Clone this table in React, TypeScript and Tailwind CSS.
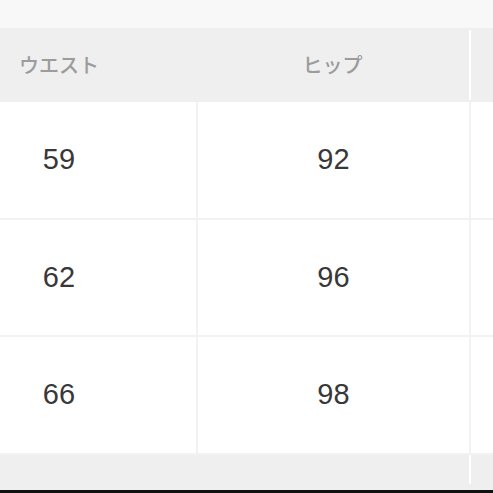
// App.tsx
const rows = [
  { waist: "59", hip: "92" },
  { waist: "62", hip: "96" },
  { waist: "66", hip: "98" },
];

const rowHeights = ["h-[118px]", "h-[117px]", "h-[118px]"];

export default function App() {
  return (
    <div className="w-[493px] h-[493px] overflow-hidden bg-white flex flex-col font-['Liberation_Sans','Noto_Sans_CJK_JP',sans-serif]">
      {/* top band */}
      <div className="h-[28px] shrink-0 bg-[#f8f8f8]" />

      {/* size table, scrolled slightly to the left */}
      <div className="ml-[-78px] flex flex-col w-[900px]">
        {/* header */}
        <div className="h-[74px] bg-[#efefef] grid grid-cols-[274px_273px_273px]">
          <div className="flex items-center justify-center text-[20px] font-medium text-[#9c9c9c] font-['Noto_Sans_CJK_JP',sans-serif]">
            ウエスト
          </div>
          <div className="flex items-center justify-center text-[20px] font-medium text-[#9c9c9c] font-['Noto_Sans_CJK_JP',sans-serif]">
            ヒップ
          </div>
          <div className="border-l-2 border-white my-[2px]" />
        </div>

        {/* body */}
        {rows.map((r, i) => (
          <div
            key={r.waist}
            className={`${rowHeights[i]} grid grid-cols-[274px_273px_273px] border-b-2 border-[#f2f2f2]`}
          >
            <div className="flex items-center justify-center text-[29px] text-[#383838]">
              {r.waist}
            </div>
            <div className="flex items-center justify-center text-[29px] text-[#383838] border-l-2 border-[#f2f2f2]">
              {r.hip}
            </div>
            <div className="border-l-2 border-[#f2f2f2]" />
          </div>
        ))}

        {/* footer band */}
        <div className="h-[35px] bg-[#efefef] grid grid-cols-[274px_273px_273px]">
          <div />
          <div />
          <div className="border-l-2 border-white mb-[6px]" />
        </div>
      </div>

      <div className="h-[3px] shrink-0 bg-[#111]" />
    </div>
  );
}
